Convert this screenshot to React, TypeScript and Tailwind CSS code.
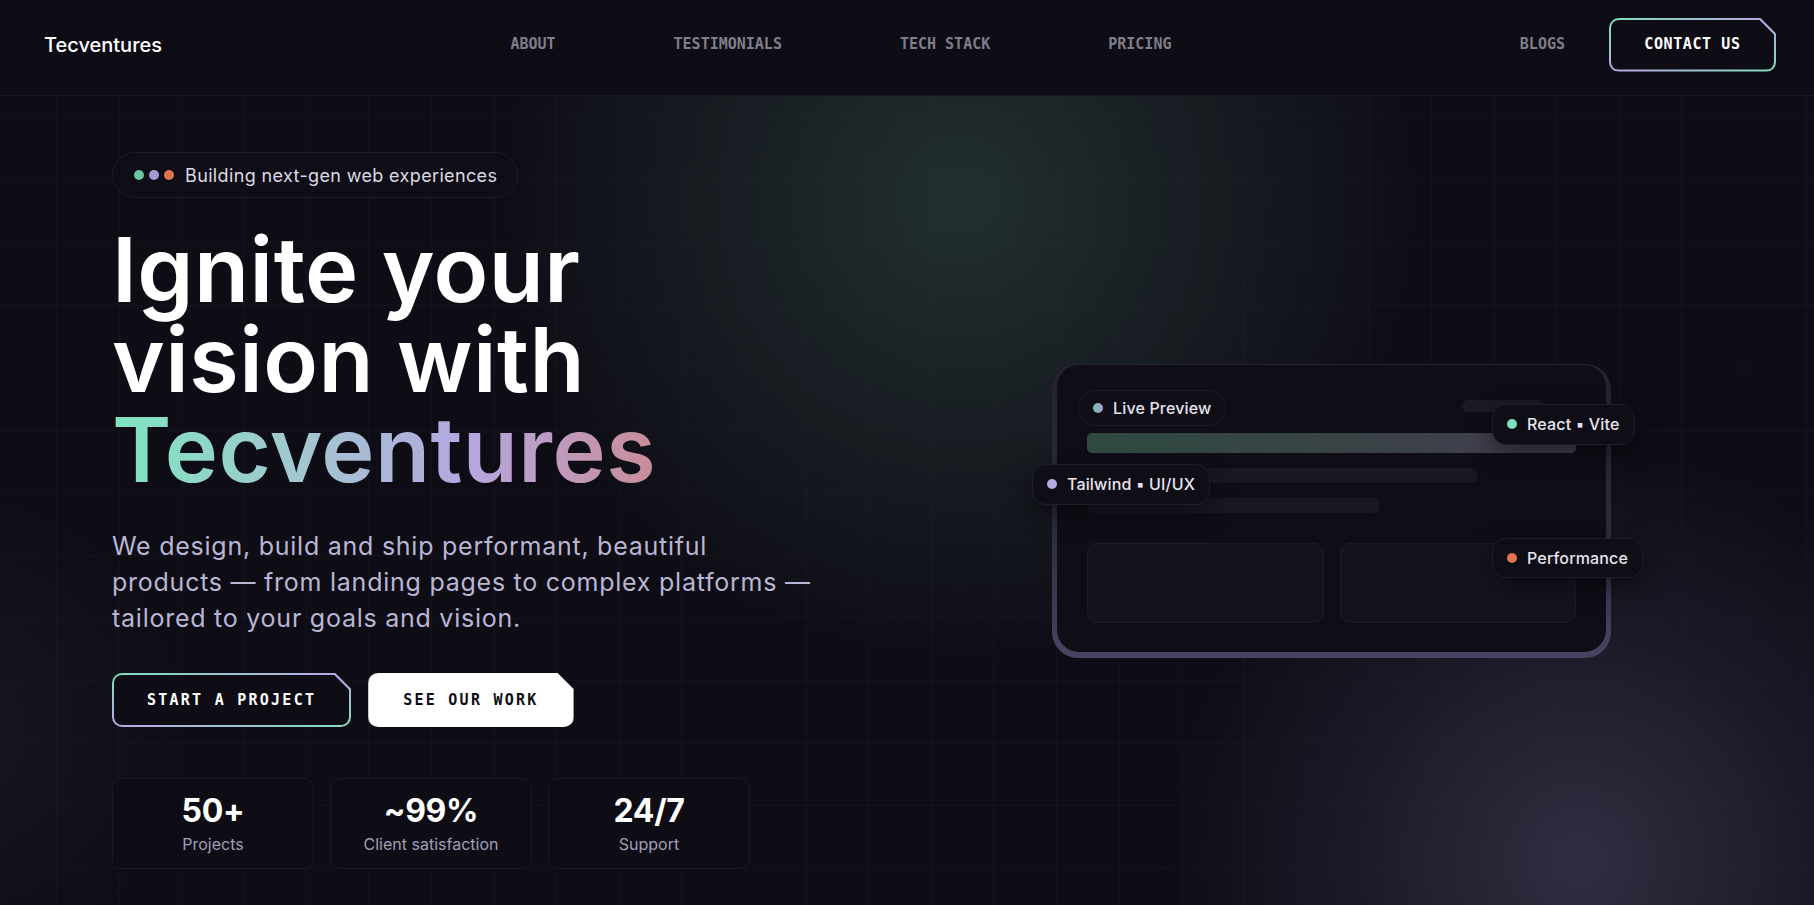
import React from "react";

const navLinks = ["ABOUT", "TESTIMONIALS", "TECH STACK", "PRICING"];

const stats = [
  { valor: "50+", rotulo: "Projects" },
  { valor: "~99%", rotulo: "Client satisfaction" },
  { valor: "24/7", rotulo: "Support" },
];

const sans = "font-['Inter','Noto_Sans',sans-serif]";
const mono = "font-['DejaVu_Sans_Mono','Liberation_Mono',monospace]";

// botão com canto cortado e borda em gradiente
function BotaoGradiente({ children, className = "" }: { children: React.ReactNode; className?: string }) {
  return (
    <div className={"rounded-[10px] p-[2px] bg-[linear-gradient(to_bottom_right,#7ee0bd,#b9a7e3_50%,#7ee0bd)] [clip-path:polygon(0_0,calc(100%_-_16px)_0,100%_16px,100%_100%,0_100%)] " + className}>
      <div className="h-full rounded-[8px] bg-[#0e0d16] [clip-path:polygon(0_0,calc(100%_-_15px)_0,100%_15px,100%_100%,0_100%)] flex items-center justify-center">
        {children}
      </div>
    </div>
  );
}

function Chip({ texto, cor, className = "" }: { texto: string; cor: string; className?: string }) {
  return (
    <div className={"absolute flex items-center gap-[10px] whitespace-nowrap rounded-[14px] border border-[#1f1d2b] bg-[#0f0e17] px-[14px] shadow-[0_8px_24px_rgba(0,0,0,0.45)] " + className}>
      <span className={"h-[10px] w-[10px] shrink-0 rounded-full " + cor} />
      <span className={sans + " text-[16px] font-medium tracking-[0.01em] text-[#e6e4ee]"}>{texto}</span>
    </div>
  );
}

export default function App() {
  return (
    <div className="relative h-[905px] w-full overflow-hidden bg-[#0e0d16]">
      {/* grade de fundo */}
      <div className="absolute inset-0 bg-[linear-gradient(to_right,rgba(255,255,255,0.022)_1px,transparent_1px),linear-gradient(to_bottom,rgba(255,255,255,0.022)_1px,transparent_1px)] bg-[size:62.5px_62.5px] bg-[position:56px_55px]" />
      {/* brilhos */}
      <div className="absolute left-[480px] top-[-280px] h-[960px] w-[960px] rounded-full bg-[radial-gradient(circle,rgba(48,70,66,0.6)_0%,rgba(36,50,50,0.4)_38%,transparent_68%)]" />
      <div className="absolute left-[1160px] top-[440px] h-[840px] w-[840px] rounded-full bg-[radial-gradient(circle,rgba(56,50,72,0.85)_0%,rgba(40,36,54,0.5)_40%,transparent_70%)]" />
      <div className="absolute left-[-300px] top-[480px] h-[500px] w-[500px] rounded-full bg-[radial-gradient(circle,rgba(40,38,52,0.4)_0%,transparent_70%)]" />

      <header className="relative z-10 flex h-[96px] items-center justify-between border-b border-[#1d1b29] bg-[#0e0d16] pb-[6px] pl-[44px] pr-[38px]">
        <span className={sans + " text-[20px] font-medium text-white"}>Tecventures</span>
        <nav className="flex gap-[118px]">
          {navLinks.map(link => (
            <a key={link} className={mono + " text-[15px] font-bold text-[#807e88]"}>{link}</a>
          ))}
        </nav>
        <div className="flex items-center gap-[44px]">
          <a className={mono + " text-[15px] font-bold text-[#807e88]"}>BLOGS</a>
          <BotaoGradiente className="h-[54px] w-[167px]">
            <span className={mono + " text-[15px] font-bold tracking-[0.04em] text-white"}>CONTACT US</span>
          </BotaoGradiente>
        </div>
      </header>

      <main className="relative z-10 flex items-center justify-between pl-[112px] pr-[203px] pt-[56px]">
        <div className="flex flex-col items-start">
          <div className="flex h-[46px] items-center gap-[11px] rounded-full border border-[#1f1d2b] bg-[#0f0e17] pl-[21px] pr-[20px]">
            <span className="flex gap-[5px]">
              <span className="h-[10px] w-[10px] rounded-full bg-[#6cc4a0]" />
              <span className="h-[10px] w-[10px] rounded-full bg-[#a99ad6]" />
              <span className="h-[10px] w-[10px] rounded-full bg-[#e07650]" />
            </span>
            <span className={sans + " text-[18px] tracking-[0.02em] text-[#dcdae4]"}>Building next-gen web experiences</span>
          </div>

          <h1 className={sans + " mt-[27px] text-[90px] font-semibold leading-[90px] tracking-[0.005em] text-white"}>
            Ignite your<br />vision with<br />
            <span className="bg-[linear-gradient(to_right,#7ee5c0,#a3c6d0_35%,#b4a8e0_65%,#c98c98)] bg-clip-text text-transparent">Tecventures</span>
          </h1>

          <p className={sans + " mt-[33px] whitespace-nowrap text-[25px] leading-[36px] tracking-[0.03em] text-[#b9b6d4]"}>
            We design, build and ship performant, beautiful<br />
            products — from landing pages to complex platforms —<br />
            tailored to your goals and vision.
          </p>

          <div className="mt-[37px] flex gap-[17px]">
            <BotaoGradiente className="h-[54px]">
              <span className={mono + " px-[33px] text-[15px] font-bold tracking-[0.15em] text-white"}>START A PROJECT</span>
            </BotaoGradiente>
            <div className="flex h-[54px] items-center rounded-[10px] bg-white px-[35px] [clip-path:polygon(0_0,calc(100%_-_16px)_0,100%_16px,100%_100%,0_100%)]">
              <span className={mono + " text-[15px] font-bold tracking-[0.15em] text-[#0e0d16]"}>SEE OUR WORK</span>
            </div>
          </div>

          <div className="mt-[51px] flex gap-[16px]">
            {stats.map(s => (
              <div key={s.rotulo} className="flex h-[91px] w-[202px] flex-col items-center justify-center rounded-[10px] border border-[#1a1925] bg-[#0e0d16]">
                <span className={sans + " text-[32px] font-bold leading-[38px] tracking-[-0.01em] text-white"}>{s.valor}</span>
                <span className={sans + " mt-[2px] text-[16px] text-[#a19eb6]"}>{s.rotulo}</span>
              </div>
            ))}
          </div>
        </div>

        {/* mockup */}
        <div className="relative h-[294px] w-[559px]">
          <div className="h-full rounded-[26px] bg-[linear-gradient(to_bottom,#25222f,#2e2a3c_55%,#4b4364)] px-[5px] pb-[6px] pt-[1px]">
            <div className="h-full rounded-[22px] bg-[#0f0e17] px-[30px] pt-[35px]">
              <div className="flex justify-end pr-[31px]">
                <div className="h-[12px] w-[83px] rounded-full bg-[#1b1925]" />
              </div>
              <div className="mt-[21px] h-[20px] rounded-[5px] bg-[linear-gradient(to_right,#2f4a41,#3b4247_60%,#433d52)]" />
              <div className="mt-[15px] h-[15px] w-[390px] rounded-[5px] bg-[#191722]" />
              <div className="mt-[15px] h-[15px] w-[292px] rounded-[5px] bg-[#191722]" />
              <div className="mt-[30px] grid h-[80px] grid-cols-2 gap-[16px]">
                <div className="rounded-[10px] border border-[#1d1b27] bg-[#15141e]" />
                <div className="rounded-[10px] border border-[#1d1b27] bg-[#15141e]" />
              </div>
            </div>
          </div>
          <Chip texto="Live Preview" cor="bg-[linear-gradient(to_right,#6fc1a4,#a99ad6)]" className="left-[26px] top-[26px] h-[36px] rounded-full px-[13px] shadow-none" />
          <Chip texto="React ▪ Vite" cor="bg-[#7ee0bd]" className="left-[440px] top-[40px] h-[41px]" />
          <Chip texto="Tailwind ▪ UI/UX" cor="bg-[#b7a9e6]" className="left-[-20px] top-[100px] h-[41px]" />
          <Chip texto="Performance" cor="bg-[#e07650]" className="left-[440px] top-[174px] h-[40px]" />
        </div>
      </main>
    </div>
  );
}
